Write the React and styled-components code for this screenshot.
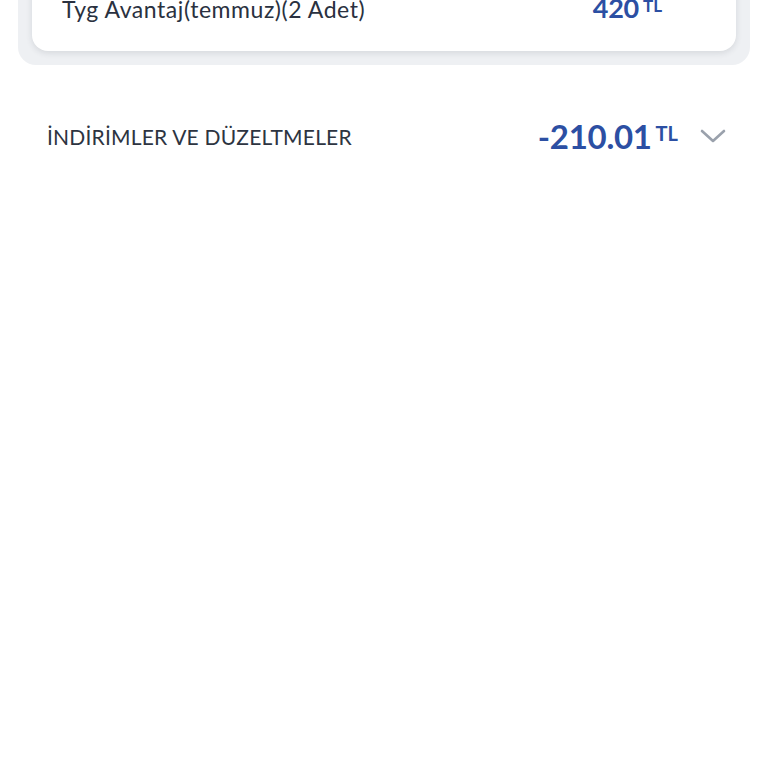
import React from "react";
import styled, { createGlobalStyle } from "styled-components";

const Global = createGlobalStyle`
  html, body { margin: 0; padding: 0; background: #ffffff; }
  body { font-family: "Lato", "Noto Sans", sans-serif; }
`;

const Page = styled.div`
  width: 768px;
  height: 768px;
  overflow: hidden;
  background: #ffffff;
`;

const Shift = styled.div`
  margin-top: -46px;
`;

const OuterCard = styled.div`
  margin: 0 18px;
  background: #eef0f3;
  border-radius: 0 0 18px 18px;
  padding: 0 14px 14px;
`;

const InnerCard = styled.div`
  background: #ffffff;
  border-radius: 0 0 16px 16px;
  box-shadow: 0 2px 6px rgba(30, 40, 60, 0.12);
  padding: 40px 74px 28px 30px;
`;

const ItemRow = styled.div`
  display: flex;
  align-items: baseline;
  justify-content: space-between;
`;

const ItemLabel = styled.span`
  font-size: 23px;
  color: #2a3140;
  letter-spacing: 0.55px;
`;

const Amount = styled.span`
  display: inline-flex;
  align-items: flex-start;
  color: #2c4fa3;
  font-weight: 700;
  font-size: ${(p) => p.$size}px;
  letter-spacing: -0.3px;
  line-height: 1;
`;

const Currency = styled.span`
  font-size: ${(p) => p.$size}px;
  font-weight: 700;
  margin-left: 4px;
  margin-top: ${(p) => p.$offset}px;
  letter-spacing: 0;
`;

const SummaryRow = styled.div`
  display: flex;
  align-items: center;
  justify-content: space-between;
  padding: 0 42px 0 47px;
  margin-top: 51px;
  height: 40px;
`;

const SummaryLabel = styled.span`
  font-size: 21px;
  color: #2d3441;
  letter-spacing: 0.2px;
`;

const Right = styled.div`
  display: flex;
  align-items: center;
  gap: 22px;
`;

const Chevron = () => (
  <svg width="26" height="18" viewBox="0 0 26 18" fill="none">
    <path d="M2 4 L13 14 L24 4" stroke="#9aa1ac" strokeWidth="2.6" strokeLinecap="round" strokeLinejoin="round" />
  </svg>
);

export default function App() {
  return (
    <Page>
      <Global />
      <Shift>
        <OuterCard>
          <InnerCard>
            <ItemRow>
              <ItemLabel>Tyg Avantaj(temmuz)(2 Adet)</ItemLabel>
              <Amount $size={27}>
                420<Currency $size={17} $offset={3}>TL</Currency>
              </Amount>
            </ItemRow>
          </InnerCard>
        </OuterCard>
        <SummaryRow>
          <SummaryLabel>İNDİRİMLER VE DÜZELTMELER</SummaryLabel>
          <Right>
            <Amount $size={33}>
              -210.01<Currency $size={20} $offset={3}>TL</Currency>
            </Amount>
            <Chevron />
          </Right>
        </SummaryRow>
      </Shift>
    </Page>
  );
}
